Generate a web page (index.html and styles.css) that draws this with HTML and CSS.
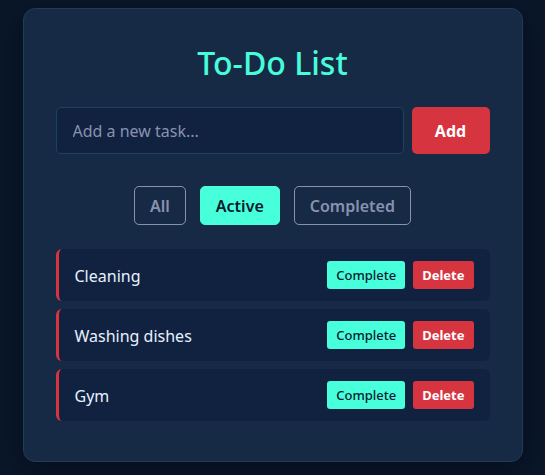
FILE: index.html
```html
<!DOCTYPE html>
<html lang="en">
<head>
<meta charset="utf-8">
<title>To-Do List</title>
<link rel="stylesheet" href="styles.css">
</head>
<body>
  <main class="card">
    <h1 class="title">To-Do List</h1>
    <form class="add-row" onsubmit="return false">
      <input class="task-input" type="text" placeholder="Add a new task...">
      <button class="add-btn" type="submit">Add</button>
    </form>
    <div class="filters">
      <button class="filter">All</button>
      <button class="filter filter-active">Active</button>
      <button class="filter">Completed</button>
    </div>
    <ul class="tasks">
      <li class="task">
        <span class="task-text">Cleaning</span>
        <div class="task-actions">
          <button class="btn-complete">Complete</button>
          <button class="btn-delete">Delete</button>
        </div>
      </li>
      <li class="task">
        <span class="task-text">Washing dishes</span>
        <div class="task-actions">
          <button class="btn-complete">Complete</button>
          <button class="btn-delete">Delete</button>
        </div>
      </li>
      <li class="task">
        <span class="task-text">Gym</span>
        <div class="task-actions">
          <button class="btn-complete">Complete</button>
          <button class="btn-delete">Delete</button>
        </div>
      </li>
    </ul>
  </main>
</body>
</html>
```
FILE: styles.css
```css
* { box-sizing: border-box; }
html, body { margin: 0; }
body {
  background: #0a172a;
  font-family: "Noto Sans", "Open Sans", sans-serif;
  padding-top: 8px;
  min-height: 475px;
}
.card {
  width: 500px;
  margin: 0 auto;
  background: #172a45;
  border: 1px solid #1f3d55;
  border-radius: 12px;
  padding: 32px 32px 32px;
  box-shadow: 0 8px 30px rgba(2, 8, 20, 0.6);
}
.title {
  margin: 0 0 22px;
  text-align: center;
  color: #47fcda;
  font-size: 32px;
  font-weight: 500;
  line-height: 44px;
}
.add-row {
  display: flex;
  gap: 8px;
  margin: 0 0 32px;
}
.task-input {
  flex: 1;
  height: 47px;
  background: #112240;
  border: 1px solid #1d4456;
  border-radius: 5px;
  padding: 0 16px;
  font-family: inherit;
  font-size: 16px;
  color: #ccd6f6;
  outline: none;
}
.task-input::placeholder { color: #8892b0; }
.add-btn {
  width: 78px;
  height: 47px;
  background: #d6343f;
  color: #fff;
  border: none;
  border-radius: 5px;
  font-family: inherit;
  font-size: 16px;
  font-weight: 700;
}
.filters {
  display: flex;
  justify-content: center;
  gap: 14px;
  margin-bottom: 24px;
}
.filter {
  height: 39px;
  padding: 0 15px;
  background: transparent;
  border: 1px solid #8892b0;
  border-radius: 5px;
  color: #8892b0;
  font-family: inherit;
  font-size: 16px;
  font-weight: 600;
}
.filter-active {
  background: #47ffda;
  border-color: #47ffda;
  color: #0a192f;
}
.tasks {
  list-style: none;
  margin: 0;
  padding: 0;
}
.task {
  display: flex;
  align-items: center;
  justify-content: space-between;
  height: 52px;
  margin-bottom: 8px;
  background: #112240;
  border-left: 3px solid #d6343f;
  border-radius: 6px;
  padding: 0 16px 0 16px;
}
.task-text {
  color: #e6f1ff;
  font-size: 16px;
  padding-top: 2px;
}
.task-actions {
  display: flex;
  gap: 8px;
}
.btn-complete, .btn-delete {
  height: 28px;
  border: none;
  border-radius: 3px;
  font-family: inherit;
  font-size: 13px;
  padding: 0 9px;
}
.btn-complete {
  background: #47ffda;
  color: #0a192f;
  font-weight: 500;
}
.btn-delete {
  background: #d6343f;
  color: #fff;
  font-weight: 700;
}
```
